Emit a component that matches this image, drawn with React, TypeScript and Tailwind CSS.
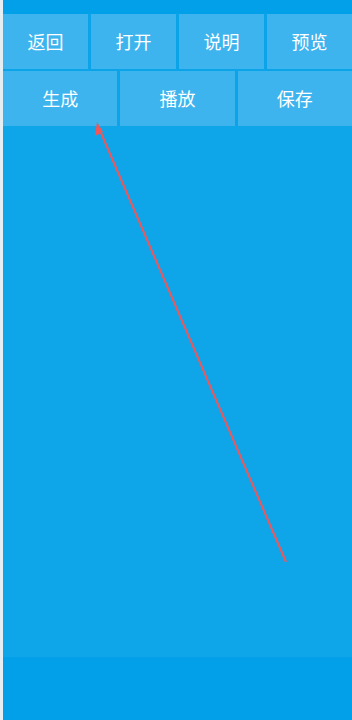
import React from 'react';

const topRow = ['返回', '打开', '说明', '预览'];
const bottomRow = ['生成', '播放', '保存'];

function Cell({ label }: { label: string }) {
  return (
    <button className="flex h-[55px] items-center justify-center bg-[#3eb4ee] text-[18px] text-white">
      {label}
    </button>
  );
}

export default function App() {
  return (
    <div
      className="relative flex h-[720px] w-[352px] bg-[#e4eef3]"
      style={{ fontFamily: '"Noto Sans CJK SC", "Noto Sans", sans-serif' }}
    >
      <div className="w-[3px]" />
      <div className="flex flex-1 flex-col bg-[#0ea6e9]">
        <div className="h-[14px] bg-[#02a0e8]" />
        <div className="grid grid-cols-4 gap-[3px] bg-[#0ba4e9] pb-[2px]">
          {topRow.map((t) => (
            <Cell key={t} label={t} />
          ))}
        </div>
        <div className="grid grid-cols-3 gap-[3px] bg-[#0ba4e9]">
          {bottomRow.map((t) => (
            <Cell key={t} label={t} />
          ))}
        </div>
        <div className="flex-1" />
        <div className="h-[63px] bg-[#02a0e8]" />
      </div>

      {/* drawn arrow over the canvas */}
      <svg className="pointer-events-none absolute left-0 top-0" width="352" height="720">
        <line x1="286" y1="562" x2="98" y2="126" stroke="#f0575a" strokeWidth="2" />
        <path d="M97 122 L95 136 L103 132 Z" fill="#f0575a" />
      </svg>
    </div>
  );
}
